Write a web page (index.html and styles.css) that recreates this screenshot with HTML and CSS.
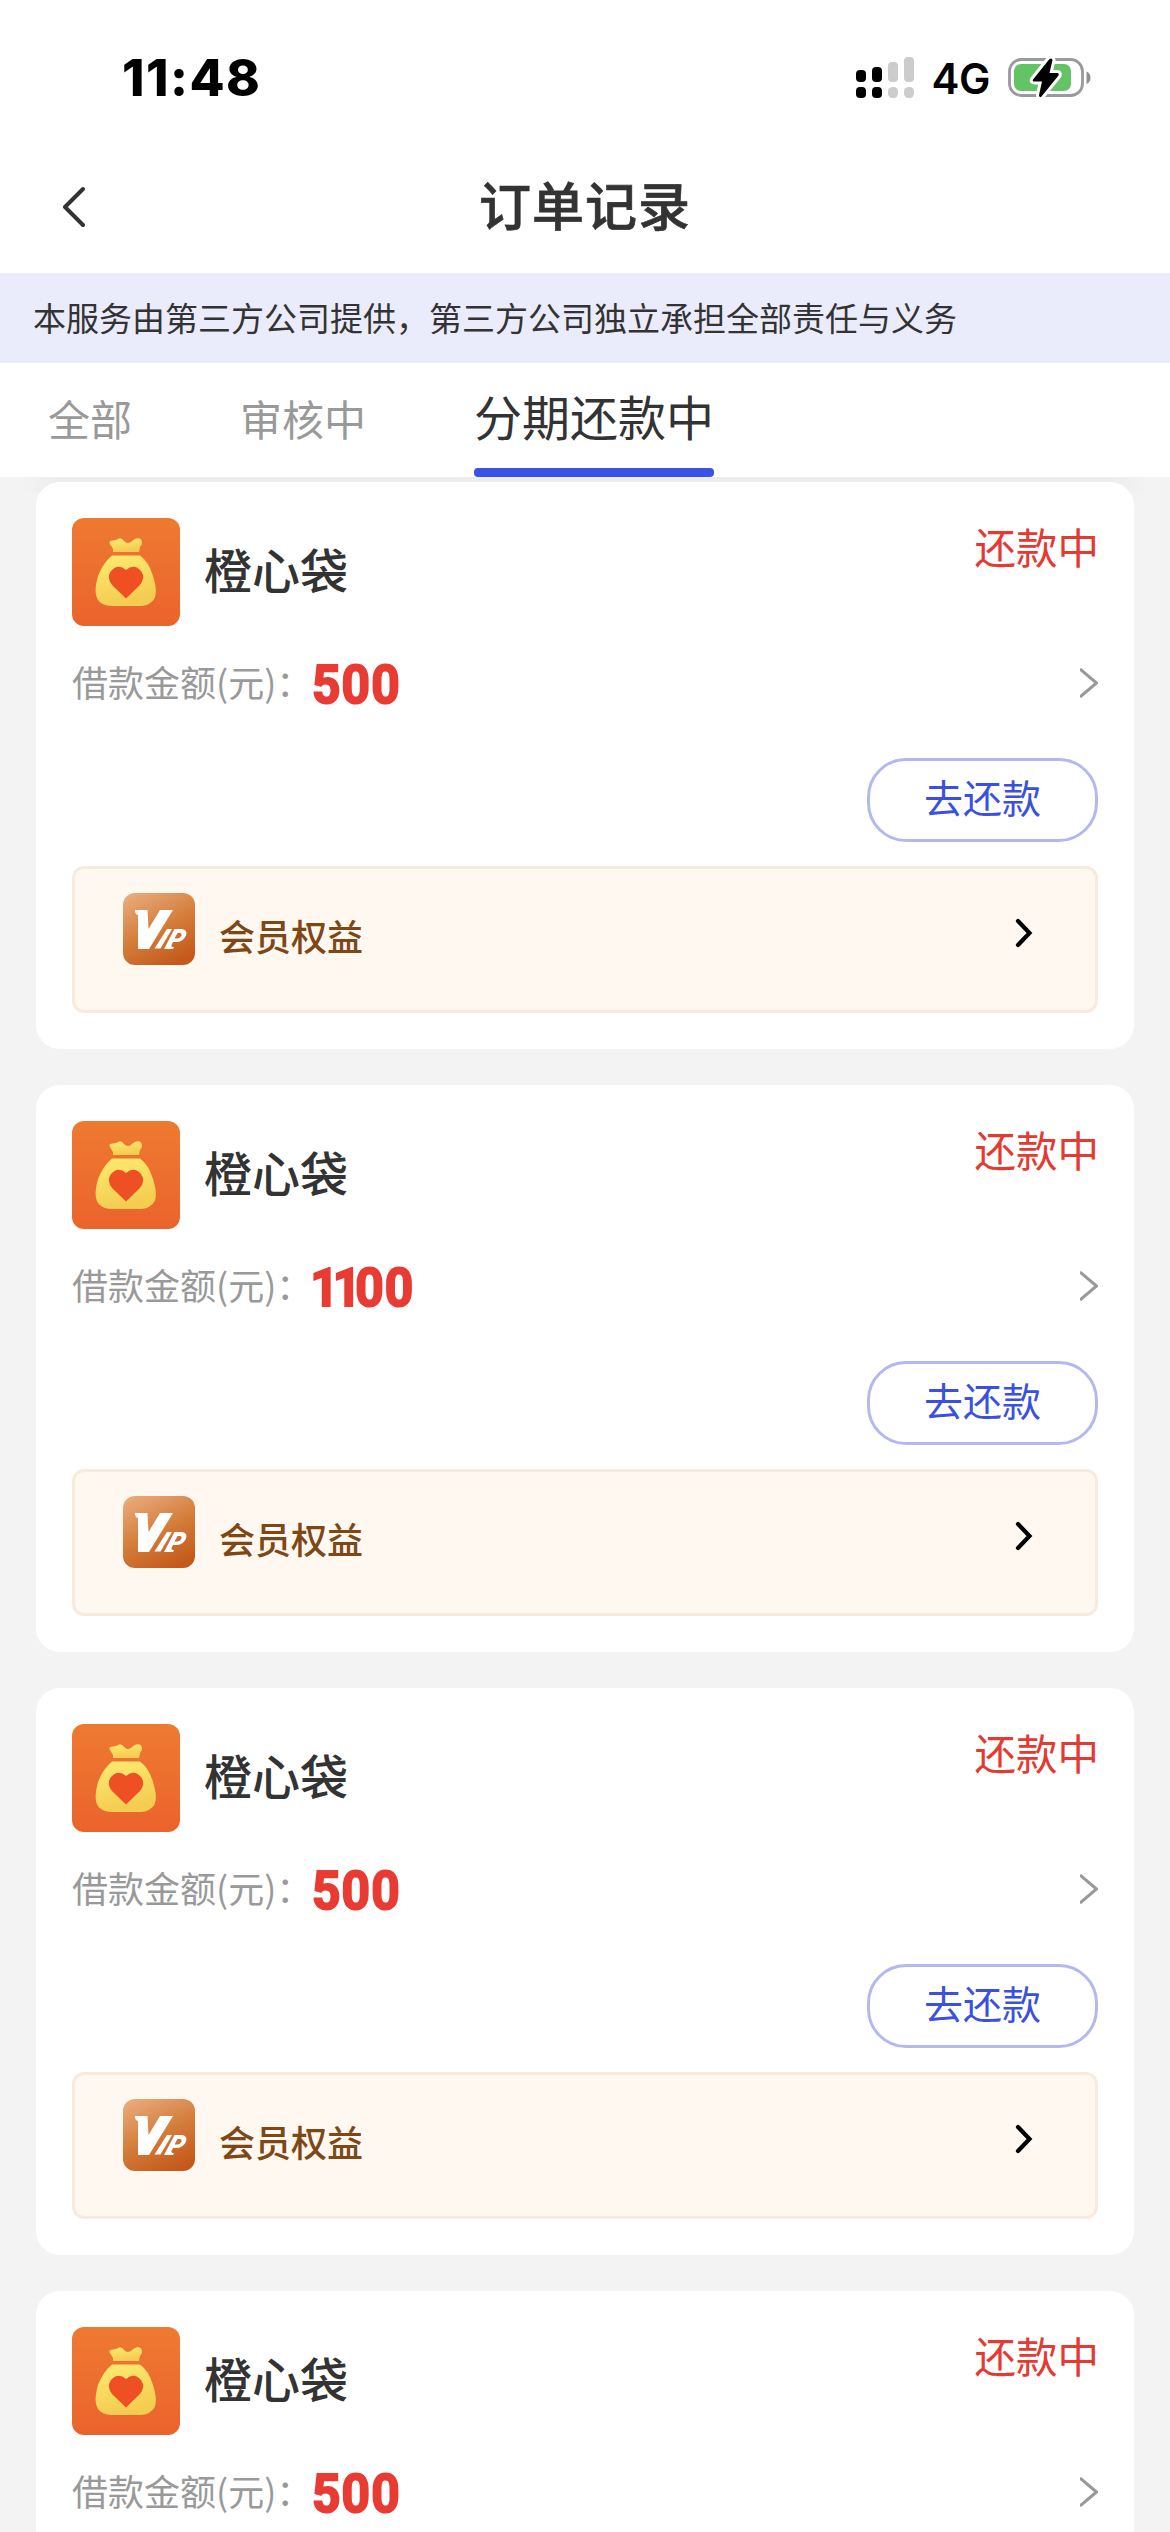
FILE: index.html
```html
<!DOCTYPE html>
<html lang="zh-CN">
<head>
<meta charset="utf-8">
<title>订单记录</title>
<link rel="stylesheet" href="styles.css">
</head>
<body>
<svg class="defs" width="0" height="0" aria-hidden="true">
  <defs>
    <linearGradient id="orange" x1="0" y1="0" x2="0" y2="1"><stop offset="0" stop-color="#ee7a31"/><stop offset="1" stop-color="#eb632c"/></linearGradient>
    <linearGradient id="gold" x1="0" y1="0" x2="0.3" y2="1"><stop offset="0" stop-color="#fdeb72"/><stop offset="1" stop-color="#f4cc50"/></linearGradient>
    <linearGradient id="bronze" x1="0.2" y1="0" x2="0.7" y2="1"><stop offset="0" stop-color="#e8a878"/><stop offset="0.5" stop-color="#d47e3c"/><stop offset="1" stop-color="#c4591b"/></linearGradient>
    <symbol id="bag" viewBox="0 0 108 108">
      <rect width="108" height="108" rx="12" fill="url(#orange)"/>
      <path d="M41 34 L41 31 L38 26 Q36 22.500 41 22.500 Q44 22.500 47 20.500 Q50 19.500 52 23 Q56 27 60 23 Q62 21 64 20.500 Q70 19 70 25 Q70 27 68 29 L67 34 Z" fill="url(#gold)"/>
      <path d="M40 37.500 H68 Q77 44 81 58 Q88 80 78 85 Q75 88 68 88 H40 Q33 88 29 85 Q20 79 26 58 Q31 45 40 37.500 Z" fill="url(#gold)"/>
      <path d="M54 80.500 L40.500 67.500 Q34 60 39 53 Q46 45 54 52 Q62 45 69 53 Q74 60 67.500 67.500 Z" fill="#ee5024"/>
    </symbol>
    <symbol id="vip" viewBox="0 0 72 72">
      <rect width="72" height="72" rx="12" fill="url(#bronze)"/>
      <path d="M12 17 H24.500 L25.500 36 L37 17 H50 L26 56 H15 V22 Q12 21.500 12 17 Z" fill="#fff"/>
      <path d="M44 36 H49 L37.500 55.500 H31.500 Z" fill="#fff"/>
      <path d="M51.500 36 H59 Q65 37 63 42.500 Q60 49 54 49 H50 L48.500 52 Q48 54 51 54 L50 56 H41 Z M54.500 40 L51.500 45.500 H54.500 Q57.500 45 58.500 42.500 Q59 40 57 40 Z" fill="#fff" fill-rule="evenodd"/>
    </symbol>
    <symbol id="arrow-thin" viewBox="0 0 18 30"><path d="M0 1 L16.500 15 L0 29" fill="none" stroke="#999" stroke-width="3"/></symbol>
    <symbol id="arrow-bold" viewBox="0 0 18 30"><path d="M3 3 L14.500 15 L3 27" fill="none" stroke="#000" stroke-width="4.200" stroke-linecap="round"/></symbol>
  </defs>
</svg>

<header class="top">
  <div class="status-bar">
    <span class="clock">11:48</span>
    <div class="status-icons">
      <svg width="58" height="42" viewBox="0 0 58 42">
        <g fill="#000"><rect y="13" width="10" height="12" rx="4"/><rect x="16" y="10" width="10" height="15" rx="4"/><rect y="30" width="10" height="11" rx="4"/><rect x="16" y="30" width="10" height="11" rx="4"/></g>
        <g fill="#ccc"><rect x="32" y="5" width="10" height="20" rx="4"/><rect x="48" width="10" height="25" rx="4"/><rect x="32" y="30" width="10" height="11" rx="4.500"/><rect x="48" y="30" width="10" height="11" rx="4.500"/></g>
      </svg>
      <span class="network">4G</span>
      <svg class="battery" width="83" height="42" viewBox="0 0 83 42">
        <rect x="1.500" y="2.500" width="73" height="36" rx="12" fill="#fff" stroke="#9a999e" stroke-width="2.800"/>
        <rect x="6" y="7" width="57" height="27" rx="7" fill="#63c466"/>
        <path d="M78.500 14.500 Q82.500 16 82.500 21 Q82.500 25 78.500 27 Z" fill="#8f8f93"/>
        <path d="M41.500 2 L25 22.500 Q24 24.500 26.500 24.500 H34 L31 38 Q31 41 33.500 39.500 L50.500 18.500 Q51.500 16 49 16 H41.500 L44.500 3 Q44 .5 41.500 2 Z" fill="#000" stroke="#fff" stroke-width="6" stroke-linejoin="round" paint-order="stroke"/>
      </svg>
    </div>
  </div>
  <nav class="title-bar">
    <svg class="back" width="24" height="42" viewBox="0 0 24 42"><path d="M22 3 L4 21 L22 39" fill="none" stroke="#333" stroke-width="4" stroke-linecap="round" stroke-linejoin="round"/></svg>
    <h1 class="title">订单记录</h1>
  </nav>
</header>
<p class="notice">本服务由第三方公司提供，第三方公司独立承担全部责任与义务</p>
<div class="tabs">
  <span class="tab">全部</span>
  <span class="tab">审核中</span>
  <span class="tab tab-active">分期还款中</span>
</div>

<main class="list">
  <article class="card">
    <div class="card-head"><svg class="logo"><use href="#bag"/></svg><h2 class="name">橙心袋</h2><span class="state">还款中</span></div>
    <div class="amount-row"><span class="label">借款金额(元)：</span><strong class="amount">500</strong><svg class="chevron"><use href="#arrow-thin"/></svg></div>
    <button class="repay">去还款</button>
    <div class="vip"><svg class="vip-icon"><use href="#vip"/></svg><span class="vip-text">会员权益</span><svg class="chevron"><use href="#arrow-bold"/></svg></div>
  </article>
  <article class="card">
    <div class="card-head"><svg class="logo"><use href="#bag"/></svg><h2 class="name">橙心袋</h2><span class="state">还款中</span></div>
    <div class="amount-row"><span class="label">借款金额(元)：</span><strong class="amount amount-long"><span class="ones">11</span>00</strong><svg class="chevron"><use href="#arrow-thin"/></svg></div>
    <button class="repay">去还款</button>
    <div class="vip"><svg class="vip-icon"><use href="#vip"/></svg><span class="vip-text">会员权益</span><svg class="chevron"><use href="#arrow-bold"/></svg></div>
  </article>
  <article class="card">
    <div class="card-head"><svg class="logo"><use href="#bag"/></svg><h2 class="name">橙心袋</h2><span class="state">还款中</span></div>
    <div class="amount-row"><span class="label">借款金额(元)：</span><strong class="amount">500</strong><svg class="chevron"><use href="#arrow-thin"/></svg></div>
    <button class="repay">去还款</button>
    <div class="vip"><svg class="vip-icon"><use href="#vip"/></svg><span class="vip-text">会员权益</span><svg class="chevron"><use href="#arrow-bold"/></svg></div>
  </article>
  <article class="card card-partial">
    <div class="card-head"><svg class="logo"><use href="#bag"/></svg><h2 class="name">橙心袋</h2><span class="state">还款中</span></div>
    <div class="amount-row"><span class="label">借款金额(元)：</span><strong class="amount">500</strong><svg class="chevron"><use href="#arrow-thin"/></svg></div>
  </article>
</main>
</body>
</html>
```
FILE: styles.css
```css
* { box-sizing: border-box; margin: 0; padding: 0; }
body {
  width: 1170px;
  height: 2532px;
  display: flex;
  flex-direction: column;
  overflow: hidden;
  background: #f3f3f3;
  color: #333;
  font-family: "Noto Sans CJK SC", sans-serif;
}
svg { display: block; flex: none; }
.defs { position: absolute; }
.top { height: 273px; flex: none; background: #fff; }
.status-bar {
  height: 141px;
  padding: 15px 79px 0 122px;
  display: flex;
  align-items: center;
  justify-content: space-between;
}
.clock { font: 800 51px/60px Inter, sans-serif; color: #000; letter-spacing: 1.5px; }
.status-icons { display: flex; align-items: center; }
.network { margin-left: 18px; padding-top: 2px; font: 600 42px/50px Inter, sans-serif; color: #000; letter-spacing: -0.5px; }
.battery { margin-left: 18px; }
.title-bar { height: 132px; display: grid; grid-template-columns: 120px 1fr 120px; align-items: center; }
.back { margin-left: 61px; }
.title { padding-bottom: 6px; text-align: center; font-size: 52px; line-height: 76px; font-weight: 500; letter-spacing: 1px; -webkit-text-stroke: 0.7px #333; }
.notice {
  height: 90px;
  flex: none;
  padding-left: 33px;
  background: #ebecfb;
  font-size: 33px;
  line-height: 88px;
  white-space: nowrap;
}
.tabs {
  height: 114px;
  flex: none;
  padding-left: 48px;
  display: flex;
  gap: 108px;
  background: #fff;
}
.tab { font-size: 42px; line-height: 109px; color: #999; }
.tab-active { display: flex; flex-direction: column; font-size: 48px; line-height: 105px; color: #333; }
.tab-active::after { content: ""; height: 9px; border-radius: 4px; background: #3a53e4; }
.list {
  flex: none;
  padding: 5px 36px 0;
  display: flex;
  flex-direction: column;
  gap: 36px;
  background: linear-gradient(90deg, #f3f3f3 20px, #ededed 60px, #ededed 1110px, #f3f3f3 1150px) top / 100% 16px no-repeat;
}
.card { height: 567px; padding: 36px; display: flex; flex-direction: column; background: #fff; border-radius: 24px; }
.card-partial { height: 241px; border-radius: 24px 24px 0 0; }
.card-head { height: 108px; display: flex; align-items: center; }
.logo { width: 108px; height: 108px; }
.name { margin-left: 24px; padding-bottom: 8px; font-size: 48px; line-height: 70px; font-weight: 500; }
.state { margin-left: auto; margin-right: -1px; align-self: flex-start; font-size: 41.500px; line-height: 56px; color: #e43a31; }
.amount-row { height: 60px; margin-top: 27px; display: flex; align-items: center; }
.label { width: 240px; padding-bottom: 5px; font-size: 36px; line-height: 54px; color: #999; white-space: nowrap; }
.amount { padding-top: 4px; font: 700 54px/60px Roboto, sans-serif; color: #e83b33; letter-spacing: 1.2px; transform: scaleX(0.92); transform-origin: left; -webkit-text-stroke: 2px #e83b33; }
.amount-long { letter-spacing: 1px; }
.ones { letter-spacing: -6.500px; margin-left: -2px; }
.chevron { width: 18px; height: 30px; margin-left: auto; }
.repay {
  width: 231px;
  height: 84px;
  margin-top: 45px;
  align-self: flex-end;
  border: 3px solid #b3b9ee;
  border-radius: 39px;
  background: #fff;
  color: #3a50e0;
  font: 400 39px/70px "Noto Sans CJK SC", sans-serif;
  padding-bottom: 8px;
}
.vip {
  height: 147px;
  margin-top: 24px;
  padding: 0 62px 14px 48px;
  display: flex;
  align-items: center;
  border: 3px solid #f9eade;
  border-radius: 12px;
  background: #fef8f1;
}
.vip-icon { width: 72px; height: 72px; margin-top: -8px; }
.vip-text { margin-left: 24px; padding-top: 5px; font-size: 36px; line-height: 54px; font-weight: 500; color: #7e4716; }
```
